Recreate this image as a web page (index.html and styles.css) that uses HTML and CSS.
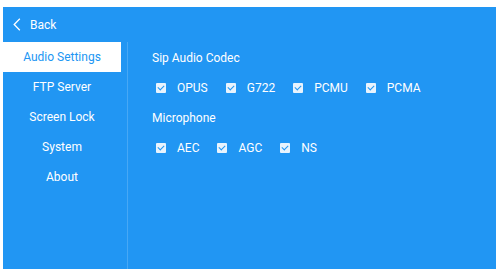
FILE: index.html
```html
<!DOCTYPE html>
<html lang="en">
    <head>
        <meta charset="UTF-8">
        <title>Settings</title>
        <link rel="stylesheet" href="styles.css">
    </head>
    <body>
        <div class="screen">
            <div class="header">
                <svg class="back-icon" width="8" height="13" viewBox="0 0 8 13">
                    <path d="M6.8 0.8 L1.2 6.5 L6.8 12.2" fill="none" stroke="#fff" stroke-width="1.3"/>
                </svg>
                <span class="back">Back</span>
            </div>
            <div class="main">
                <div class="sidebar">
                    <div class="nav active">Audio Settings</div>
                    <div class="nav">FTP Server</div>
                    <div class="nav">Screen Lock</div>
                    <div class="nav">System</div>
                    <div class="nav">About</div>
                </div>
                <div class="content">
                    <div class="title">Sip Audio Codec</div>
                    <div class="options">
                        <label class="opt"><span class="cb"></span>OPUS</label>
                        <label class="opt"><span class="cb"></span>G722</label>
                        <label class="opt"><span class="cb"></span>PCMU</label>
                        <label class="opt"><span class="cb"></span>PCMA</label>
                    </div>
                    <div class="title">Microphone</div>
                    <div class="options">
                        <label class="opt"><span class="cb"></span>AEC</label>
                        <label class="opt"><span class="cb"></span>AGC</label>
                        <label class="opt"><span class="cb"></span>NS</label>
                    </div>
                </div>
            </div>
        </div>
    </body>
</html>
```

FILE: styles.css
```css
*{
    margin: 0;
    padding: 0;
    box-sizing: border-box;
}
body{
    width: 496px;
    height: 269px;
    background: #fff;
    padding: 7px 0 0 3px;
    font-family: Roboto, "Liberation Sans", sans-serif;
    font-size: 12px;
    color: #fff;
    overflow: hidden;
}
.screen{
    display: flex;
    flex-direction: column;
    height: 262px;
    background: #2196f3;
}
.header{
    display: flex;
    align-items: center;
    height: 35px;
    padding-left: 10px;
}
.back-icon{
    display: block;
}
.back{
    margin-left: 9px;
    font-size: 12px;
}
.main{
    display: flex;
    flex: 1;
}
.sidebar{
    width: 125px;
    padding-right: 6px;
    border-right: 1px solid #47a8f5;
}
.nav{
    height: 30px;
    line-height: 30px;
    text-align: center;
}
.nav.active{
    background: #fff;
    color: #2196f3;
}
.content{
    flex: 1;
    padding: 1px 0 0 24px;
}
.title{
    height: 30px;
    line-height: 30px;
}
.options{
    display: flex;
    align-items: center;
    height: 30px;
    padding-left: 4px;
}
.opt{
    display: flex;
    align-items: center;
    margin-right: 18px;
}
.cb{
    position: relative;
    width: 10px;
    height: 10px;
    margin-right: 11px;
    border-radius: 1px;
    background: #e8f3fd;
}
.cb::after{
    content: "";
    position: absolute;
    left: 3px;
    top: 1px;
    width: 3px;
    height: 5px;
    border: solid #2196f3;
    border-width: 0 1.5px 1.5px 0;
    transform: rotate(45deg);
}
```
